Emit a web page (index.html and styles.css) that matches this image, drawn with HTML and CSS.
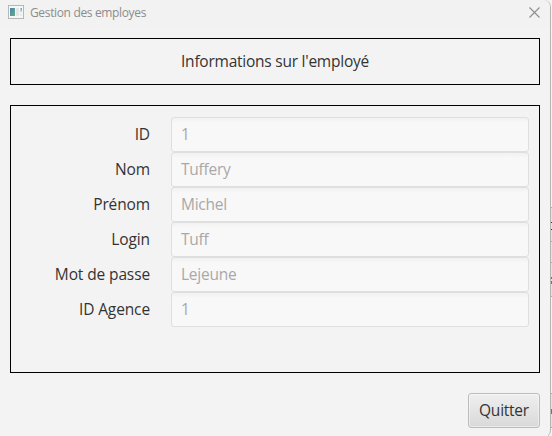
FILE: index.html
```html
<!DOCTYPE html>
<html lang="fr">
<head>
<meta charset="utf-8">
<title>Gestion des employes</title>
<link rel="stylesheet" href="styles.css">
</head>
<body>
<div class="backdrop" aria-hidden="true">
  <svg width="3" height="436" viewBox="0 0 3 436" shape-rendering="crispEdges">
    <path fill="#e2e2e2" d="M0 207h3v90H0zM0 393h3v35H0z"/>
    <path fill="#aaa" d="M0 207h3v1H0zM0 241h3v1H0zM0 262h3v1H0zM0 296h3v1H0zM0 393h3v1H0zM0 427h3v1H0z"/>
    <path fill="#333" d="M1 222h2v1H1zM1 229h2v1H1z"/>
    <path fill="#68728d" d="M1 277h2v2H1zM1 281h2v3H1zM1 409h2v5H1z"/>
  </svg>
</div>
<div class="window">
  <header class="titlebar">
    <svg class="app-icon" width="16" height="14" viewBox="0 0 16 14">
      <defs><linearGradient id="g" x1="0" y1="0" x2="1" y2="1"><stop offset="0" stop-color="#4c84ac"/><stop offset="1" stop-color="#63ad83"/></linearGradient></defs>
      <rect x=".5" y=".5" width="15" height="13" fill="#f6f7f8" stroke="#b5b8bb"/>
      <rect x="2" y="3" width="5" height="8" fill="url(#g)"/>
      <rect x="8" y="3" width="3" height="8" fill="#e4e5e6"/>
      <path fill="#79afc4" d="M12 3h2v4z"/>
      <path fill="#b9d9c3" d="M12 3l2 4h-2z"/>
      <rect x="12" y="8" width="2" height="3" fill="#e8eaeb"/>
    </svg>
    <span class="title">Gestion des employes</span>
    <svg class="close" width="11" height="11" viewBox="0 0 11 11"><path d="M.5.5l10 10M10.5.5l-10 10" fill="none" stroke="#8e8e8e" stroke-width="1.1"/></svg>
  </header>
  <main class="content">
    <section class="heading"><span>Informations sur l'employé</span></section>
    <section class="form">
      <label>ID</label><div class="field">1</div>
      <label>Nom</label><div class="field">Tuffery</div>
      <label>Prénom</label><div class="field">Michel</div>
      <label>Login</label><div class="field">Tuff</div>
      <label>Mot de passe</label><div class="field">Lejeune</div>
      <label>ID Agence</label><div class="field">1</div>
    </section>
    <button class="quit" type="button">Quitter</button>
  </main>
</div>
</body>
</html>
```
FILE: styles.css
```css
* { box-sizing: border-box; }
body {
  margin: 0;
  width: 552px;
  height: 436px;
  overflow: hidden;
  background: #f3f3f3;
  font-family: "Open Sans", "Noto Sans", sans-serif;
  font-size: 15.5px;
  line-height: 20px;
  letter-spacing: -.24px;
  color: #333;
}
.backdrop { position: absolute; right: 0; top: 0; width: 3px; height: 436px; }
.backdrop svg { display: block; }
.window {
  position: relative;
  width: 551px;
  height: 438px;
  background: #f3f3f3;
  border-right: 1px solid #b4b4b4;
  border-radius: 6px 7px 8px 5px;
}
.titlebar {
  display: flex;
  align-items: flex-start;
  height: 28px;
  padding: 5px 10px 0 8px;
  background: #f2f2f2;
  border-radius: 6px 7px 0 0;
}
.title { margin-left: 6px; font-size: 12px; line-height: 16px; color: #8c8c8c; letter-spacing: -.35px; }
.close { margin: 2px 0 0 auto; }
.content { display: flex; flex-direction: column; padding: 10px; }
.heading {
  display: flex;
  align-items: center;
  justify-content: center;
  height: 47px;
  padding-bottom: 1px;
  border: 1px solid #000;
}
.form {
  display: grid;
  grid-template-columns: 139px 358px;
  grid-auto-rows: 35px;
  column-gap: 21px;
  align-content: start;
  align-items: center;
  height: 268px;
  margin-top: 20px;
  padding-top: 11px;
  border: 1px solid #000;
}
label { padding-bottom: 1px; text-align: right; white-space: nowrap; letter-spacing: -.12px; }
.field {
  height: 35px;
  padding: 6px 9px;
  border: 1px solid #dfdfdf;
  border-radius: 3px;
  background: linear-gradient(#f1f1f1, #f8f8f8 5px);
  color: #a8a8a8;
}
.quit {
  align-self: flex-end;
  width: 72px;
  height: 35px;
  margin-top: 20px;
  padding: 0 0 1px;
  border: 1px solid #bcbcbc;
  border-radius: 3px;
  background: linear-gradient(#efefef, #d9d9d9);
  box-shadow: inset 0 0 0 1px rgba(255, 255, 255, .45);
  color: #333;
  font: inherit;
  letter-spacing: inherit;
}
```
